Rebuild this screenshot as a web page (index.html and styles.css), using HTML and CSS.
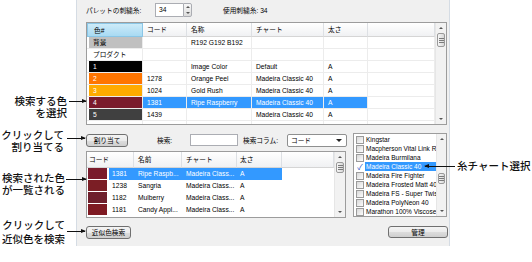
FILE: index.html
```html
<!DOCTYPE html>
<html lang="ja">
<head>
    <meta charset="UTF-8">
    <meta name="viewport" content="width=device-width, initial-scale=1.0">
    <title>カラーパレット</title>
    <link rel="stylesheet" href="styles.css">
</head>
<body>
<div class="figure">
    <div class="dialog">
        <div class="topbar">
            <span class="palette-lbl">パレットの刺繍糸:</span>
            <span class="spin">
                <span class="spin-val">34</span>
                <span class="spin-btns">
                    <span class="sb-btn"><i class="tri up"></i></span>
                    <span class="sb-btn"><i class="tri down"></i></span>
                </span>
            </span>
            <span class="used-lbl">使用刺繍糸: 34</span>
        </div>

        <!-- palette colours -->
        <div class="listview colors">
            <div class="rows">
                <div class="row head">
                    <div class="c c-num sorted">色#</div>
                    <div class="c c-code">コード</div>
                    <div class="c c-name">名称</div>
                    <div class="c c-chart">チャート</div>
                    <div class="c c-weight">太さ</div>
                    <div class="c c-fill"></div>
                </div>
                <div class="row">
                    <div class="c c-num"><span class="chip light" style="background:#c0c0c0">背景</span></div>
                    <div class="c c-code"></div>
                    <div class="c c-name">R192 G192 B192</div>
                    <div class="c c-chart"></div>
                    <div class="c c-weight"></div>
                    <div class="c c-fill"></div>
                </div>
                <div class="row">
                    <div class="c c-num"><span class="chip light">プロダクト</span></div>
                    <div class="c c-code"></div>
                    <div class="c c-name"></div>
                    <div class="c c-chart"></div>
                    <div class="c c-weight"></div>
                    <div class="c c-fill"></div>
                </div>
                <div class="row">
                    <div class="c c-num"><span class="chip" style="background:#000000">1</span></div>
                    <div class="c c-code"></div>
                    <div class="c c-name">Image Color</div>
                    <div class="c c-chart">Default</div>
                    <div class="c c-weight">A</div>
                    <div class="c c-fill"></div>
                </div>
                <div class="row">
                    <div class="c c-num"><span class="chip" style="background:#ff7500">2</span></div>
                    <div class="c c-code">1278</div>
                    <div class="c c-name">Orange Peel</div>
                    <div class="c c-chart">Madeira Classic 40</div>
                    <div class="c c-weight">A</div>
                    <div class="c c-fill"></div>
                </div>
                <div class="row">
                    <div class="c c-num"><span class="chip" style="background:#ffaa00">3</span></div>
                    <div class="c c-code">1024</div>
                    <div class="c c-name">Gold Rush</div>
                    <div class="c c-chart">Madeira Classic 40</div>
                    <div class="c c-weight">A</div>
                    <div class="c c-fill"></div>
                </div>
                <div class="row sel">
                    <div class="c c-num"><span class="chip" style="background:#7a1b2c">4</span></div>
                    <div class="c c-code">1381</div>
                    <div class="c c-name">Ripe Raspberry</div>
                    <div class="c c-chart">Madeira Classic 40</div>
                    <div class="c c-weight">A</div>
                    <div class="c c-fill"></div>
                </div>
                <div class="row">
                    <div class="c c-num"><span class="chip" style="background:#404040">5</span></div>
                    <div class="c c-code">1439</div>
                    <div class="c c-name"></div>
                    <div class="c c-chart">Madeira Classic 40</div>
                    <div class="c c-weight">A</div>
                    <div class="c c-fill"></div>
                </div>
                <div class="row">
                    <div class="c c-num"></div>
                    <div class="c c-code"></div>
                    <div class="c c-name"></div>
                    <div class="c c-chart"></div>
                    <div class="c c-weight"></div>
                    <div class="c c-fill"></div>
                </div>
            </div>
            <div class="vscroll">
                <span class="sb-btn"><i class="tri up"></i></span>
                <span class="thumb"></span>
                <span class="track"></span>
                <span class="sb-btn"><i class="tri down"></i></span>
            </div>
        </div>

        <div class="lower">
            <div class="lower-left">
                <div class="toolbar">
                    <button class="btn btn-assign">割り当て</button>
                    <span class="search-lbl">検索:</span>
                    <span class="field"></span>
                    <span class="column-lbl">検索コラム:</span>
                    <span class="combo">コード<i class="tri down big"></i></span>
                </div>

                <!-- search results -->
                <div class="listview found">
                    <div class="rows">
                        <div class="row head">
                            <div class="c f-code">コード</div>
                            <div class="c f-name">名前</div>
                            <div class="c f-chart">チャート</div>
                            <div class="c f-weight">太さ</div>
                            <div class="c f-fill"></div>
                        </div>
                        <div class="row item sel">
                            <div class="c f-code"><span class="sw" style="background:#7a1b2c"></span><span class="code">1381</span></div>
                            <div class="c f-name">Ripe Raspb...</div>
                            <div class="c f-chart">Madeira Class...</div>
                            <div class="c f-weight">A</div>
                            <div class="c f-fill"></div>
                        </div>
                        <div class="row item">
                            <div class="c f-code"><span class="sw" style="background:#7b1e25"></span><span class="code">1238</span></div>
                            <div class="c f-name">Sangria</div>
                            <div class="c f-chart">Madeira Class...</div>
                            <div class="c f-weight">A</div>
                            <div class="c f-fill"></div>
                        </div>
                        <div class="row item">
                            <div class="c f-code"><span class="sw" style="background:#6e1f2c"></span><span class="code">1182</span></div>
                            <div class="c f-name">Mulberry</div>
                            <div class="c f-chart">Madeira Class...</div>
                            <div class="c f-weight">A</div>
                            <div class="c f-fill"></div>
                        </div>
                        <div class="row item">
                            <div class="c f-code"><span class="sw" style="background:#7e1a22"></span><span class="code">1181</span></div>
                            <div class="c f-name">Candy Appl...</div>
                            <div class="c f-chart">Madeira Class...</div>
                            <div class="c f-weight">A</div>
                            <div class="c f-fill"></div>
                        </div>
                    </div>
                    <div class="vscroll">
                        <span class="sb-btn"><i class="tri up"></i></span>
                        <span class="thumb small"></span>
                        <span class="track"></span>
                        <span class="sb-btn"><i class="tri down"></i></span>
                    </div>
                </div>

                <button class="btn btn-near">近似色検索</button>
            </div>

            <div class="lower-right">
                <!-- thread charts -->
                <div class="listview checks">
                    <div class="check-items">
                        <div class="check"><span class="box"></span><span class="txt">Kingstar</span></div>
                        <div class="check"><span class="box"></span><span class="txt">Macpherson Vital Link Rayon</span></div>
                        <div class="check"><span class="box"></span><span class="txt">Madeira Burmilana</span></div>
                        <div class="check sel"><span class="box on"></span><span class="txt">Madeira Classic 40</span></div>
                        <div class="check"><span class="box"></span><span class="txt">Madeira Fire Fighter</span></div>
                        <div class="check"><span class="box"></span><span class="txt">Madeira Frosted Matt 40</span></div>
                        <div class="check"><span class="box"></span><span class="txt">Madeira FS - Super Twist</span></div>
                        <div class="check"><span class="box"></span><span class="txt">Madeira PolyNeon 40</span></div>
                        <div class="check"><span class="box"></span><span class="txt">Marathon 100% Viscose</span></div>
                        <div class="check"><span class="box"></span><span class="txt">Marathon Polyester</span></div>
                    </div>
                    <div class="vscroll">
                        <span class="sb-btn"><i class="tri up"></i></span>
                        <span class="thumb tiny"></span>
                        <span class="track"></span>
                        <span class="sb-btn"><i class="tri down"></i></span>
                    </div>
                </div>
                <button class="btn btn-manage">管理</button>
            </div>
        </div>
    </div>

    <!-- callouts -->
    <div class="note note-pick"><span>検索する色</span><span>を選択</span></div>
    <i class="arrow arrow-pick"></i>

    <div class="note note-assign"><span>クリックして</span><span>割り当てる</span></div>
    <i class="arrow arrow-assign"></i>

    <div class="note note-list"><span>検索された色</span><span>が一覧される</span></div>
    <i class="arrow arrow-list"></i>

    <div class="note note-near"><span>クリックして</span><span>近似色を検索</span></div>
    <i class="arrow arrow-near"></i>

    <div class="note note-chart"><span>糸チャート選択</span></div>
    <i class="arrow arrow-chart"></i>
</div>
</body>
</html>
```

FILE: styles.css
```css
* {
    box-sizing: border-box;
}
body {
    margin: 0;
    background-color: #fff;
    font-family: "Liberation Sans", "Noto Sans CJK JP", sans-serif;
    font-size: 6.7px;
    color: #000;
}
.figure {
    position: relative;
    width: 532px;
    height: 262px;
    overflow: hidden;
}

/* dialog panel */
.dialog {
    margin-left: 76px;
    width: 374px;
    height: 246px;
    padding-left: 9px;
    background-color: #f0f0f0;
    border-left: 1px solid #d5dce4;
    border-right: 1px solid #d5dce4;
}
.topbar {
    display: flex;
    align-items: center;
    height: 20px;
}
.palette-lbl {
    width: 69px;
}
.spin {
    display: flex;
    height: 14px;
}
.spin-val {
    width: 28px;
    padding-left: 3px;
    line-height: 12px;
    background-color: #fff;
    border: 1px solid #abadb3;
    border-right: none;
}
.spin-btns {
    width: 9px;
    display: flex;
    flex-direction: column;
    border: 1px solid #abadb3;
    border-radius: 0 2px 2px 0;
    background: linear-gradient(#f8f8f8, #dcdcdc);
}
.spin-btns .sb-btn {
    flex: 1;
    height: auto;
}
.used-lbl {
    margin-left: 31px;
}

/* small triangles */
.tri {
    display: block;
    width: 0;
    height: 0;
    border-left: 2px solid transparent;
    border-right: 2px solid transparent;
}
.tri.up {
    border-bottom: 2px solid #555;
}
.tri.down {
    border-top: 2px solid #555;
}
.tri.big {
    border-left-width: 3px;
    border-right-width: 3px;
    border-top: 3px solid #222;
}

/* list views */
.listview {
    display: flex;
    background-color: #fff;
    border: 1px solid #9c9c9c;
    overflow: hidden;
}
.rows {
    flex: none;
    overflow: hidden;
}
.row {
    display: flex;
    height: 12px;
}
.c {
    flex: none;
    height: 100%;
    padding-left: 4px;
    line-height: 11px;
    white-space: nowrap;
    overflow: hidden;
    border-right: 1px solid #ececec;
    border-bottom: 1px solid #ececec;
}
.head .c {
    background: linear-gradient(#ffffff, #f0f1f3);
    border-right: 1px solid #dde0e4;
    border-bottom: 1px solid #d5d5d5;
}
.head .sorted {
    padding-left: 6px;
    background: linear-gradient(#cdebf9, #a8daf3);
    border: 1px solid #8ac6e6;
}

.colors {
    margin-top: 2px;
    width: 361px;
    height: 103px;
}
.colors .rows {
    width: 348px;
}
.colors .head {
    height: 14px;
}
.colors .head .c {
    line-height: 13px;
}
.c-num { width: 56px; padding-left: 0; }
.c-code { width: 44px; }
.c-name { width: 65px; }
.c-chart { width: 72px; }
.c-weight { width: 44px; }
.c-fill { width: 67px; }
.chip {
    display: block;
    height: 11px;
    margin-left: 2px;
    padding-left: 4px;
    color: #fff;
}
.chip.light {
    color: #000;
}
.row.sel .c-code,
.row.sel .c-name,
.row.sel .c-chart,
.row.sel .c-weight {
    background-color: #3399ff;
    color: #fff;
}

/* scrollbars */
.vscroll {
    flex: none;
    width: 11px;
    display: flex;
    flex-direction: column;
    background-color: #f2f2f2;
    border-left: 1px solid #e6e6e6;
}
.sb-btn {
    height: 10px;
    display: flex;
    align-items: center;
    justify-content: center;
}
.thumb {
    height: 14px;
    margin: 0 1px;
    display: flex;
    align-items: center;
    justify-content: center;
    border: 1px solid #9a9a9a;
    border-radius: 2px;
    background: linear-gradient(to right, #f6f6f6, #d8d8d8);
}
.thumb::before {
    content: "";
    width: 5px;
    height: 5px;
    background: repeating-linear-gradient(#7a7a7a 0 1px, transparent 1px 2px);
}
.thumb.small {
    height: 11px;
}
.thumb.tiny {
    height: 11px;
    margin-top: 29px;
}
.track {
    flex: 1;
}

/* lower area */
.lower {
    display: flex;
    margin-top: 8px;
}
.lower-left {
    width: 260px;
    display: flex;
    flex-direction: column;
    align-items: flex-start;
}
.toolbar {
    display: flex;
    align-items: center;
    height: 14px;
}
.btn {
    height: 13px;
    padding: 0;
    font: inherit;
    color: #000;
    line-height: 11px;
    text-align: center;
    border: 1px solid #707070;
    border-radius: 3px;
    background: linear-gradient(#f4f4f4 0%, #ebebeb 50%, #dddddd 51%, #cfcfcf 100%);
}
.btn-assign {
    width: 42px;
}
.search-lbl {
    margin-left: 29px;
    width: 33px;
}
.field {
    width: 48px;
    height: 12px;
    background-color: #fff;
    border: 1px solid #abadb3;
}
.column-lbl {
    margin-left: 5px;
    width: 44px;
}
.combo {
    width: 60px;
    height: 13px;
    display: flex;
    align-items: center;
    justify-content: space-between;
    padding: 0 4px 0 3px;
    background-color: #fff;
    border: 1px solid #8e8f8f;
    border-radius: 2px;
}

.found {
    margin-top: 4px;
    width: 260px;
    height: 67px;
}
.found .rows {
    width: 247px;
}
.found .head {
    height: 16px;
}
.found .head .c {
    line-height: 15px;
}
.found .item .c {
    border: none;
    line-height: 12px;
}
.f-code { width: 47px; padding-left: 2px; }
.f-name { width: 48px; }
.f-chart { width: 55px; }
.f-weight { width: 45px; padding-left: 3px; }
.f-fill { width: 52px; }
.found .item .f-code {
    display: flex;
    padding-left: 0;
}
.sw {
    flex: none;
    width: 19px;
    height: 11px;
    margin-left: 1px;
}
.code {
    flex: 1;
    margin-left: 2px;
    padding-left: 3px;
}
.item.sel .code,
.item.sel .f-name,
.item.sel .f-chart,
.item.sel .f-weight {
    background-color: #3399ff;
    color: #fff;
}
.btn-near {
    margin-top: 8px;
    width: 45px;
}

.lower-right {
    margin-left: 7px;
    width: 94px;
    display: flex;
    flex-direction: column;
    align-items: flex-end;
}
.checks {
    width: 94px;
    height: 84px;
}
.checks .vscroll {
    width: 10px;
}
.check-items {
    flex: 1;
    padding-top: 1px;
    overflow: hidden;
}
.check {
    display: flex;
    align-items: center;
    height: 9px;
}
.box {
    flex: none;
    width: 8px;
    height: 8px;
    margin-left: 2px;
    border: 1px solid #9a9a9a;
    background: linear-gradient(135deg, #d8d8d8, #fcfcfc);
}
.box.on {
    border-color: transparent;
    background: #fff;
    color: #1d4fc4;
    font-size: 8px;
    line-height: 7px;
    text-align: center;
}
.box.on::before {
    content: "✓";
}
.check .txt {
    flex: 1;
    margin-left: 1px;
    padding-left: 1px;
    font-size: 6.5px;
    line-height: 9px;
    white-space: nowrap;
    overflow: hidden;
}
.check.sel .txt {
    background-color: #3399ff;
    color: #fff;
}
.btn-manage {
    margin-top: 9px;
    margin-right: -1px;
    width: 60px;
    height: 12px;
}

/* callouts */
.note {
    position: absolute;
    display: flex;
    flex-direction: column;
    align-items: flex-end;
    font-family: "Noto Sans CJK JP", sans-serif;
    font-size: 10.5px;
    font-weight: 500;
    color: #111;
    white-space: nowrap;
}
.note span {
    display: block;
    height: 12px;
    line-height: 12px;
    overflow: visible;
}
.note-pick { left: 0; top: 95px; width: 67px; }
.note-assign { left: 0; top: 129px; width: 64px; }
.note-list { left: 0; top: 172px; width: 65px; }
.note-near { left: 0; top: 218px; width: 65px; }
.note-near span { height: 13.5px; line-height: 13.5px; }
.note-chart { left: 457px; top: 160px; align-items: flex-start; }

.arrow {
    position: absolute;
    height: 1px;
    background-color: #111;
}
.arrow::after {
    content: "";
    position: absolute;
    top: -2px;
    right: -1px;
    border-left: 5px solid #111;
    border-top: 2.5px solid transparent;
    border-bottom: 2.5px solid transparent;
}
.arrow-pick { left: 69px; top: 101px; width: 17px; }
.arrow-assign { left: 67px; top: 138px; width: 18px; }
.arrow-list { left: 66px; top: 179px; width: 20px; }
.arrow-near { left: 67px; top: 231px; width: 18px; }
.arrow-chart { left: 425px; top: 166px; width: 30px; }
.arrow-chart::after {
    right: auto;
    left: -1px;
    border-left: none;
    border-right: 5px solid #111;
}
```
